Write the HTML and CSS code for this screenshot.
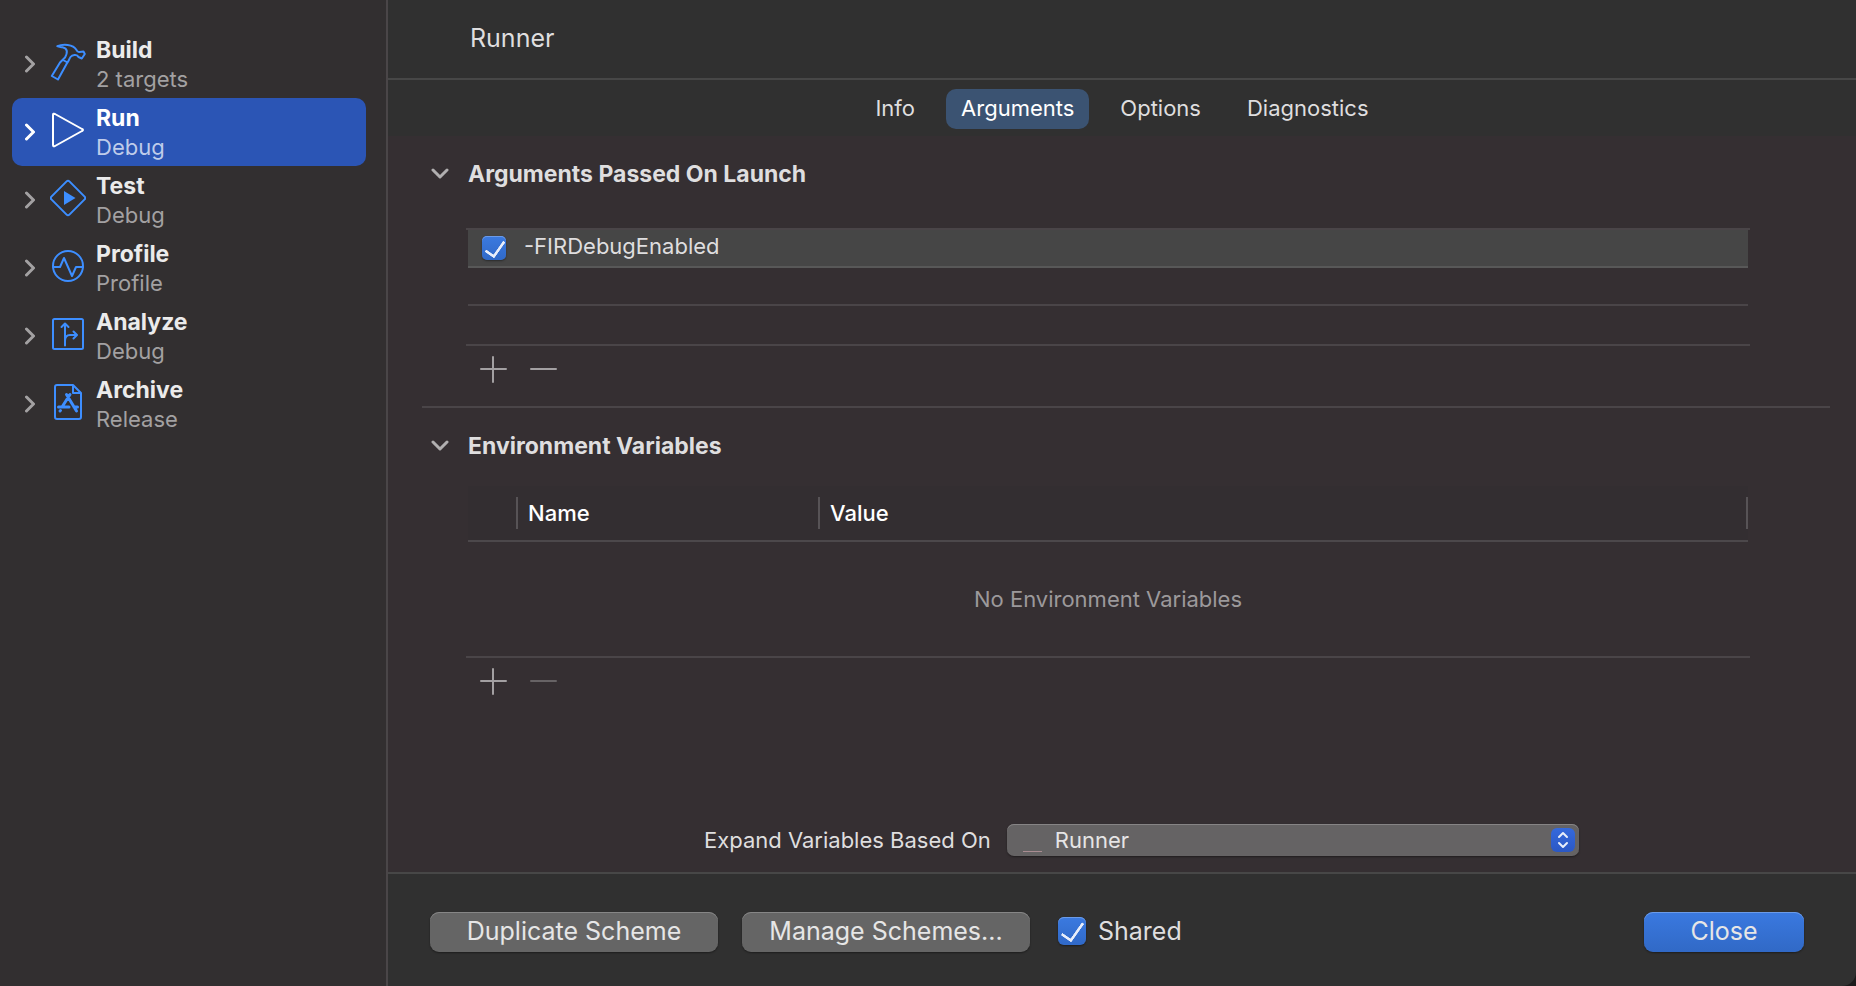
FILE: index.html
```
<!DOCTYPE html>
<html lang="en">
<head>
    <meta charset="UTF-8">
    <meta name="viewport" content="width=device-width, initial-scale=1.0">
    <title>Runner Scheme</title>
    <link rel="stylesheet" href="styles.css">
</head>
<body>
    <nav class="sidebar">
        <a href="#build" class="action">
            <svg class="chevron" viewBox="0 0 10 18"><path d="M1.5 2 L8.5 9 L1.5 16"/></svg>
            <svg class="icon" viewBox="0 0 36 38">
                <path d="M7.300 3.200 C13 0.800 23 1 26.500 7 Q27.500 9.500 29.500 9 L33.500 8.500 L34.800 11 L31.800 15.500 L28.500 14 C27 10.500 22 12 20.500 14 C19 16 19 18 16.800 20.500 L8 36.500 L1.800 33 L10 19.500 L15 14.500 C18 9 17.500 5.500 12.500 4.300 C10.500 3.800 9 4.200 7.300 3.200 Z M13 17 L17.500 19.500"/>
            </svg>
            <span class="labels"><strong>Build</strong><small>2 targets</small></span>
        </a>
        <a href="#run" class="action selected">
            <svg class="chevron" viewBox="0 0 10 18"><path d="M1.5 2 L8.5 9 L1.5 16"/></svg>
            <svg class="icon" viewBox="0 0 36 38"><path d="M3 4 V34 Q3 36 5 35 L32 20 Q34 19 32 18 L5 3 Q3 2 3 4 Z"/></svg>
            <span class="labels"><strong>Run</strong><small>Debug</small></span>
        </a>
        <a href="#test" class="action">
            <svg class="chevron" viewBox="0 0 10 18"><path d="M1.5 2 L8.5 9 L1.5 16"/></svg>
            <svg class="icon" viewBox="0 0 36 38">
                <path d="M16.600 2.400 Q18 1 19.400 2.400 L34.600 17.600 Q36 19 34.600 20.400 L19.400 35.600 Q18 37 16.600 35.600 L1.400 20.400 Q0 19 1.400 17.600 Z"/>
                <path class="solid" d="M14 12 L25.500 19 L14 26 Z"/>
            </svg>
            <span class="labels"><strong>Test</strong><small>Debug</small></span>
        </a>
        <a href="#profile" class="action">
            <svg class="chevron" viewBox="0 0 10 18"><path d="M1.5 2 L8.5 9 L1.5 16"/></svg>
            <svg class="icon" viewBox="0 0 36 38">
                <circle cx="18" cy="19" r="15"/>
                <path d="M3 20 H10 L14 11 L22 29 L26 20 H33"/>
            </svg>
            <span class="labels"><strong>Profile</strong><small>Profile</small></span>
        </a>
        <a href="#analyze" class="action">
            <svg class="chevron" viewBox="0 0 10 18"><path d="M1.5 2 L8.5 9 L1.5 16"/></svg>
            <svg class="icon" viewBox="0 0 36 38">
                <rect x="3" y="4" width="30" height="30" rx="1.500"/>
                <path d="M15 30.500 V9 M11.500 12 L15 8.500 L18.500 12 M15 26 Q15 20 20 20 H26 M23.500 16.500 L27 20 L23.500 23.500"/>
            </svg>
            <span class="labels"><strong>Analyze</strong><small>Debug</small></span>
        </a>
        <a href="#archive" class="action">
            <svg class="chevron" viewBox="0 0 10 18"><path d="M1.5 2 L8.5 9 L1.5 16"/></svg>
            <svg class="icon" viewBox="0 0 36 38">
                <path d="M7 2 H23 L31 10 V34 Q31 36 29 36 H7 Q5 36 5 34 V4 Q5 2 7 2 Z M23 2 V10 H31"/>
                <path class="thick" d="M16.500 11.500 L26.500 28 M20 11.500 L12 24 M8.500 24 H19 M24 24 H27.500 M10.500 27.500 L10 28"/>
            </svg>
            <span class="labels"><strong>Archive</strong><small>Release</small></span>
        </a>
    </nav>

    <main class="editor">
        <header class="title-bar">
            <h1>Runner</h1>
        </header>
        <div class="tabs">
            <button type="button">Info</button>
            <button type="button" class="active">Arguments</button>
            <button type="button">Options</button>
            <button type="button">Diagnostics</button>
        </div>

        <div class="content">
            <section>
                <h2>
                    <svg class="disclosure" viewBox="0 0 18 12"><path d="M2 2 L9 9 L16 2"/></svg>
                    Arguments Passed On Launch
                </h2>
                <div class="table-box ruled">
                    <table class="arguments">
                        <tr class="current">
                            <td>
                                <label><input type="checkbox" class="check" checked><span>-FIRDebugEnabled</span></label>
                            </td>
                        </tr>
                        <tr><td></td></tr>
                        <tr><td></td></tr>
                    </table>
                </div>
                <div class="edit-buttons">
                    <button type="button" aria-label="Add argument"><svg viewBox="0 0 28 28"><path d="M2 14 H27 M14 2 V27"/></svg></button>
                    <button type="button" aria-label="Remove argument"><svg viewBox="0 0 28 28"><path d="M2 14 H27"/></svg></button>
                </div>
            </section>

            <section class="environment">
                <h2>
                    <svg class="disclosure" viewBox="0 0 18 12"><path d="M2 2 L9 9 L16 2"/></svg>
                    Environment Variables
                </h2>
                <div class="table-box">
                    <table class="variables">
                        <thead>
                            <tr>
                                <th class="col-check"></th>
                                <th class="col-name"><span>Name</span></th>
                                <th><span>Value</span></th>
                            </tr>
                        </thead>
                        <tbody>
                            <tr><td colspan="3">No Environment Variables</td></tr>
                        </tbody>
                    </table>
                </div>
                <div class="edit-buttons">
                    <button type="button" aria-label="Add variable"><svg viewBox="0 0 28 28"><path d="M2 14 H27 M14 2 V27"/></svg></button>
                    <button type="button" aria-label="Remove variable" disabled><svg viewBox="0 0 28 28"><path d="M2 14 H27"/></svg></button>
                </div>
            </section>

            <div class="expand-row">
                <label for="expand">Expand Variables Based On</label>
                <div class="popup">
                    <select id="expand">
                        <option>Runner</option>
                    </select>
                    <span class="app-mark"></span>
                    <svg class="stepper" viewBox="0 0 24 24"><path d="M8 9 L12 5 L16 9 M8 15 L12 19 L16 15"/></svg>
                </div>
            </div>
        </div>

        <footer class="bottom-bar">
            <button type="button" class="push">Duplicate Scheme</button>
            <button type="button" class="push">Manage Schemes...</button>
            <label class="shared"><input type="checkbox" class="check large" checked><span>Shared</span></label>
            <button type="button" class="push primary">Close</button>
        </footer>
    </main>
</body>
</html>
```

FILE: styles.css
```
* {
    box-sizing: border-box;
}

body {
    margin: 0;
    min-height: 100vh;
    display: flex;
    background-color: #1c1b1c;
    color: #dfdedf;
    font-family: Inter, "Liberation Sans", sans-serif;
    font-size: 22px;
    line-height: 28px;
}

button,
select {
    font: inherit;
    color: inherit;
    border: none;
    background: none;
    padding: 0;
}

svg {
    display: block;
    fill: none;
    stroke: currentColor;
    stroke-width: 2;
    stroke-linecap: round;
    stroke-linejoin: round;
}

/* Sidebar */

.sidebar {
    flex: none;
    width: 388px;
    padding: 30px 20px 0 12px;
    background-color: #322f30;
    border-right: 2px solid #4a4648;
}

.action {
    display: flex;
    align-items: center;
    height: 68px;
    padding-left: 13px;
    border-radius: 10px;
    color: #a3a1a2;
    text-decoration: none;
}

.chevron {
    width: 10px;
    height: 18px;
    margin-right: 15px;
    stroke-width: 3;
}

.icon {
    width: 36px;
    height: 38px;
    margin: 0 10px 4px 0;
    color: #3d8eff;
}

.icon .solid {
    fill: currentColor;
    stroke: none;
}

.icon .thick {
    stroke-width: 3;
}

.labels {
    display: flex;
    flex-direction: column;
}

.labels strong {
    color: #ebebeb;
    font-size: 23px;
    line-height: 29px;
}

.labels small {
    font-size: 22px;
}

.selected {
    background-color: #2b55b5;
    color: #fff;
}

.selected .icon,
.selected strong {
    color: #fff;
}

.selected small {
    color: #bfccea;
}

/* Editor */

.editor {
    flex: 1;
    display: flex;
    flex-direction: column;
    min-width: 0;
}

.title-bar {
    height: 80px;
    padding: 22px 82px;
    background-color: #303030;
    border-bottom: 2px solid #474747;
}

h1 {
    margin: 0;
    font-size: 25px;
    font-weight: 400;
    line-height: 32px;
}

.tabs {
    display: flex;
    justify-content: center;
    gap: 16px;
    height: 56px;
    padding-top: 9px;
    background-color: #303030;
}

.tabs button {
    height: 40px;
    padding: 0 15px 2px;
    border-radius: 10px;
}

.tabs .active {
    background-color: #3b5372;
    color: #fff;
}

.content {
    flex: 1;
    display: flex;
    flex-direction: column;
    padding: 0 26px 16px 34px;
    background-color: #352f32;
}

section {
    padding: 24px 80px 0 44px;
}

section + section {
    border-top: 2px solid #4a4548;
}

h2 {
    display: flex;
    align-items: center;
    gap: 19px;
    margin: 0 0 40px -35px;
    font-size: 23px;
    line-height: 28px;
}

.environment h2 {
    margin-bottom: 26px;
}

.disclosure {
    width: 18px;
    height: 12px;
    color: #b1afb0;
    stroke-width: 3;
}

.table-box {
    padding: 0 2px;
    border-bottom: 2px solid #4a4548;
}

.table-box.ruled {
    border-top: 2px solid #4a4548;
}

table {
    width: 100%;
    border-spacing: 0;
    table-layout: fixed;
}

.arguments td {
    height: 38px;
    padding: 0 14px;
    border-bottom: 2px solid #4a4548;
}

.arguments tr:last-child td {
    border-bottom: none;
}

.arguments .current td {
    background-color: #464646;
    border-bottom-color: #585858;
}

.arguments label,
.shared {
    display: flex;
    align-items: center;
}

.arguments label {
    gap: 18px;
}

.arguments label span {
    padding-bottom: 4px;
}

.check {
    appearance: none;
    flex: none;
    width: 24px;
    height: 24px;
    margin: 0;
    border-radius: 5px;
    background: linear-gradient(#3b7ae0, #3069c8);
    box-shadow: inset 0 1px #6b9be8, 0 1px 2px rgba(0, 0, 0, 0.4);
}

.check:checked::before {
    content: "";
    display: block;
    width: 9px;
    height: 17px;
    margin: 1px 0 0 7px;
    border: solid #e8eefa;
    border-width: 0 3px 3px 0;
    border-radius: 1px;
    transform: rotate(35deg);
}

.check.large {
    width: 28px;
    height: 28px;
    border-radius: 6px;
}

.check.large:checked::before {
    width: 10px;
    height: 20px;
    margin-left: 8px;
}

.edit-buttons {
    display: flex;
    gap: 22px;
    padding: 9px 0 23px 13px;
    color: #a3a0a2;
}

.edit-buttons svg {
    width: 28px;
    height: 28px;
}

.edit-buttons button:disabled {
    color: #676365;
}

.variables thead {
    background-color: #332e31;
}

.variables th {
    height: 56px;
    padding: 0;
    border-bottom: 2px solid #4c484b;
    color: #fff;
    font-weight: 500;
    text-align: left;
}

.variables th span {
    display: block;
    height: 32px;
    padding: 0 10px;
    border-left: 2px solid #575356;
    line-height: 32px;
}

.variables th:last-child span {
    border-right: 2px solid #575356;
}

.col-check {
    width: 48px;
}

.col-name {
    width: 302px;
}

.variables td {
    height: 114px;
    padding: 0;
    color: #9c999b;
    text-align: center;
}

.expand-row {
    display: flex;
    align-items: center;
    gap: 16px;
    margin-top: auto;
    padding: 0 251px 0 282px;
}

.expand-row label {
    white-space: nowrap;
}

.popup {
    position: relative;
    flex: 1;
}

.popup select {
    appearance: none;
    display: block;
    width: 100%;
    height: 32px;
    padding: 0 40px 0 48px;
    border-radius: 7px;
    background-color: #656364;
    box-shadow: inset 0 1px #868485, 0 1px 2px rgba(0, 0, 0, 0.4);
    color: #e6e5e6;
}

.app-mark {
    position: absolute;
    left: 16px;
    bottom: 4px;
    width: 19px;
    height: 1px;
    background-color: #a98c91;
}

.stepper {
    position: absolute;
    top: 4px;
    right: 4px;
    width: 24px;
    height: 24px;
    border-radius: 6px;
    background: linear-gradient(#3569dc, #2b58c4);
    color: #e8eefa;
    pointer-events: none;
}

/* Bottom bar */

.bottom-bar {
    display: flex;
    align-items: center;
    gap: 24px;
    height: 114px;
    padding: 4px 52px 0 42px;
    background-color: #303030;
    border-top: 2px solid #474747;
    border-bottom-right-radius: 14px;
    font-size: 25px;
}

.push {
    width: 288px;
    height: 40px;
    padding-bottom: 2px;
    border-radius: 9px;
    background-color: #656565;
    box-shadow: inset 0 1px #868686, 0 1px 2px rgba(0, 0, 0, 0.4);
    color: #e6e6e6;
}

.primary {
    width: 160px;
    margin-left: auto;
    background: linear-gradient(#3a79e0, #3169c6);
    box-shadow: inset 0 1px #6b9be8, 0 1px 2px rgba(0, 0, 0, 0.4);
}

.shared {
    gap: 12px;
    margin-left: 4px;
    padding-bottom: 3px;
}
```
